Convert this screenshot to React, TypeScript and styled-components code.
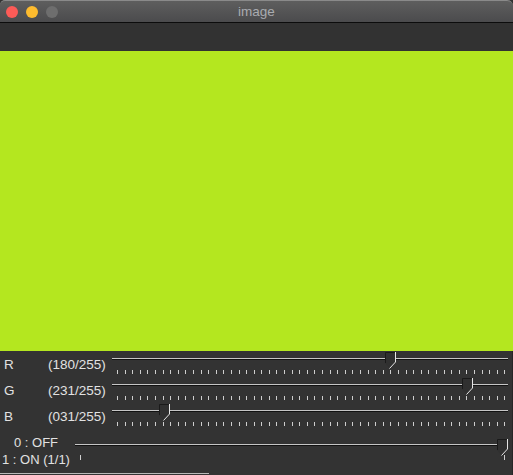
import React from "react";
import styled, { createGlobalStyle } from "styled-components";

const Global = createGlobalStyle`
  html, body { margin: 0; padding: 0; background: #1f2430; }
  body { font-family: "Liberation Sans", Arial, sans-serif; }
`;

const Window = styled.div`
  width: 513px;
  height: 475px;
  display: flex;
  flex-direction: column;
  overflow: hidden;
  background: #323232;
`;

const TitleBar = styled.div`
  flex: none;
  position: relative;
  display: flex;
  align-items: center;
  justify-content: center;
  background: linear-gradient(#5e5e5e, #4b4b4d);
  border-top: 1px solid #8a8a8a;
  border-bottom: 1px solid #0c0c0c;
  border-radius: 5px 6px 0 0;
  box-sizing: border-box;
  height: 23px;
`;

const Lights = styled.div`
  position: absolute;
  left: 6px;
  top: 5px;
  display: flex;
  gap: 8px;
`;

const Light = styled.span<{ $c: string }>`
  width: 12px;
  height: 12px;
  border-radius: 50%;
  background: ${(p) => p.$c};
`;

const Title = styled.span`
  font-size: 13.5px;
  color: #a9abb0;
  margin-top: -1px;
`;

const Toolbar = styled.div`
  height: 28px;
  flex: none;
  background: #323232;
`;

const Canvas = styled.div`
  height: 300px;
  flex: none;
  background: #b4e71f;
`;

const Controls = styled.div`
  flex: 1;
  display: flex;
  flex-direction: column;
  background: #333333;
  border-right: 1px solid #262626;
  position: relative;
`;

const SliderRow = styled.div`
  height: 26px;
  display: grid;
  grid-template-columns: 48px 64px 396px;
  font-size: 13.5px;
  color: #e2e2e2;
`;

const Label = styled.span`
  padding-left: 4px;
  padding-top: 6px;
  line-height: 16px;
`;

const Value = styled.span`
  padding-top: 6px;
  line-height: 16px;
  white-space: nowrap;
`;

const TrackArea = styled.div<{ $w: number }>`
  position: relative;
  width: ${(p) => p.$w}px;
`;

const TrackLine = styled.div`
  margin-top: 7px;
  height: 0;
  border-top: 1px solid #c6c6c6;
  border-bottom: 1px solid #121212;
`;

const Ticks = styled.div`
  margin-top: 10px;
  margin-left: 5px;
  width: 389px;
  display: flex;
  justify-content: space-between;
`;

const Tick = styled.span`
  width: 1px;
  height: 4px;
  background: #cfcfcf;
`;

const ThumbWrap = styled.div<{ $top: number }>`
  position: absolute;
  top: ${(p) => p.$top}px;
  width: 11px;
  height: 17px;
`;

const SwitchRow = styled.div`
  height: 38px;
  display: grid;
  grid-template-columns: 75px 433px;
  font-size: 13px;
  color: #e2e2e2;
`;

const SwitchLabels = styled.div`
  display: flex;
  flex-direction: column;
  align-items: center;
  width: 72px;
  padding-top: 5px;
  line-height: 17px;
  white-space: nowrap;
`;

const SwitchTrack = styled.div`
  margin-top: 15px;
  height: 0;
  border-top: 1px solid #c6c6c6;
  border-bottom: 1px solid #121212;
`;

const SwitchTicks = styled.div`
  margin-top: 9px;
  padding: 0 3px 0 5px;
  display: flex;
  justify-content: space-between;
`;

const SwitchTick = styled.span`
  width: 1px;
  height: 5px;
  background: #cfcfcf;
`;

const BottomBar = styled.div`
  position: absolute;
  left: 0;
  bottom: 1px;
  width: 209px;
  height: 1px;
  background: #b8b8b8;
`;

const Thumb = ({ left, top = 1 }: { left: number; top?: number }) => (
  <ThumbWrap $top={top} style={{ left }}>
    <svg width="11" height="17" viewBox="0 0 11 17">
      <polygon points="0,0 10.5,0 10.5,10 5,16.5 0,11" fill="#303030" />
      <polyline points="0.5,11 0.5,0.5 10,0.5" fill="none" stroke="#1a1a1a" strokeWidth="1" />
      <polyline points="10.5,0 10.5,10 4.5,16.5" fill="none" stroke="#e6e6e6" strokeWidth="1" />
    </svg>
  </ThumbWrap>
);

const sliders = [
  { name: "R", v: 180 },
  { name: "G", v: 231 },
  { name: "B", v: 31 },
];

const pad = (n: number) => String(n).padStart(3, "0");

export default function App() {
  return (
    <>
      <Global />
      <Window>
        <TitleBar>
          <Lights>
            <Light $c="#fc5b57" />
            <Light $c="#fdbb2e" />
            <Light $c="#6e6e6e" />
          </Lights>
          <Title>image</Title>
        </TitleBar>
        <Toolbar />
        <Canvas />
        <Controls>
          {sliders.map((s) => (
            <SliderRow key={s.name}>
              <Label>{s.name}</Label>
              <Value>({pad(s.v)}/255)</Value>
              <TrackArea $w={396}>
                <TrackLine />
                <Ticks>
                  {Array.from({ length: 52 }).map((_, i) => (
                    <Tick key={i} />
                  ))}
                </Ticks>
                <Thumb left={Math.round(s.v * 1.515)} />
              </TrackArea>
            </SliderRow>
          ))}
          <SwitchRow>
            <SwitchLabels>
              <span>0 : OFF</span>
              <span>1 : ON (1/1)</span>
            </SwitchLabels>
            <TrackArea $w={433}>
              <SwitchTrack />
              <SwitchTicks>
                <SwitchTick />
                <SwitchTick />
              </SwitchTicks>
              <Thumb left={422} top={10} />
            </TrackArea>
          </SwitchRow>
          <BottomBar />
        </Controls>
      </Window>
    </>
  );
}
